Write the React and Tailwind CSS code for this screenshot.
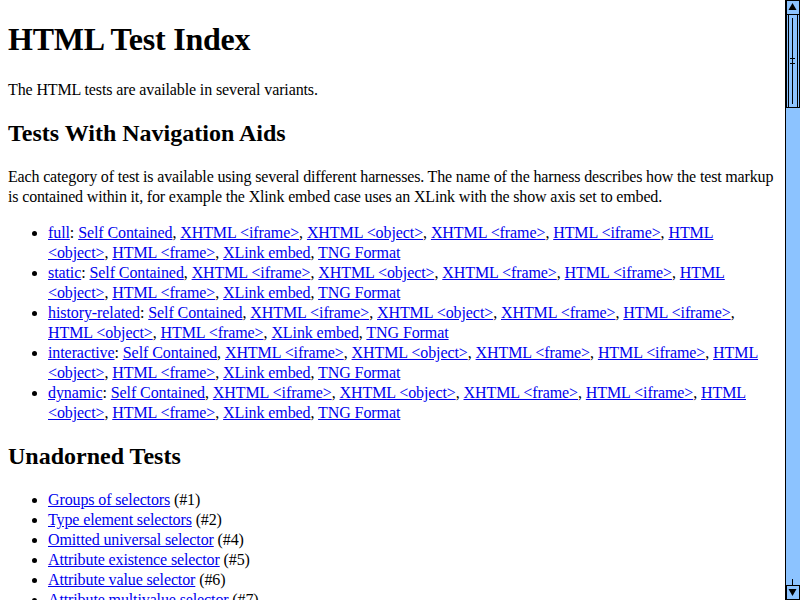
import React from "react";

const harnesses = [
  "Self Contained",
  "XHTML <iframe>",
  "XHTML <object>",
  "XHTML <frame>",
  "HTML <iframe>",
  "HTML <object>",
  "HTML <frame>",
  "XLink embed",
  "TNG Format",
];

const categories = ["full", "static", "history-related", "interactive", "dynamic"];

const unadorned = [
  ["Groups of selectors", "#1"],
  ["Type element selectors", "#2"],
  ["Omitted universal selector", "#4"],
  ["Attribute existence selector", "#5"],
  ["Attribute value selector", "#6"],
  ["Attribute multivalue selector", "#7"],
  ["Attribute value selectors (hyphen-separated attributes)", "#7b"],
];

function A({ children }) {
  return (
    <a href="#" className="text-[#0000ee] underline">
      {children}
    </a>
  );
}

function Scrollbar() {
  return (
    <svg width="15" height="600" viewBox="0 0 15 600" className="shrink-0 block">
      <rect x="0" y="0" width="15" height="600" fill="#8cc3ff" />
      <line x1="0.5" y1="0" x2="0.5" y2="600" stroke="#000" />
      {/* up button */}
      <rect x="1.5" y="0.5" width="13" height="14" fill="#8cc3ff" stroke="#000" />
      <polygon points="7.5,3 11.5,10 3.5,10" fill="#000" />
      {/* thumb */}
      <rect x="1.5" y="14.5" width="13" height="93" fill="#8cc3ff" stroke="#000" />
      <line x1="3.5" y1="15" x2="3.5" y2="107" stroke="#000" />
      <line x1="12.5" y1="15" x2="12.5" y2="107" stroke="#000" />
      <line x1="7.5" y1="18" x2="7.5" y2="104" stroke="#000" />
      <line x1="5" y1="58.5" x2="10" y2="58.5" stroke="#000" />
      <line x1="5" y1="63.5" x2="10" y2="63.5" stroke="#000" />
      {/* down button */}
      <line x1="7.5" y1="579" x2="7.5" y2="585" stroke="#000" />
      <rect x="1.5" y="585.5" width="13" height="14" fill="#8cc3ff" stroke="#000" />
      <polygon points="3.5,589 11.5,589 7.5,596" fill="#000" />
    </svg>
  );
}

export default function App() {
  return (
    <div className="flex w-[800px] h-[600px] overflow-hidden bg-white">
      <div
        className="w-[785px] h-[600px] overflow-hidden px-2 text-[16px] leading-[20px] text-black"
        style={{ fontFamily: '"Liberation Serif", "Times New Roman", serif' }}
      >
        <h1 className="text-[32px] leading-[37px] tracking-[-0.2px] font-bold mt-[21px] mb-[22px]">
          HTML Test Index
        </h1>
        <p className="mb-[19px] tracking-[-0.12px]">The HTML tests are available in several variants.</p>
        <h2 className="text-[24px] leading-[28px] font-bold mb-[20px]">Tests With Navigation Aids</h2>
        <p className="mb-4 tracking-[-0.16px]">
          Each category of test is available using several different harnesses. The name of the harness
          describes how the test markup is contained within it, for example the Xlink embed case uses an
          XLink with the show axis set to embed.
        </p>
        <ul className="list-disc pl-10 mr-[2px] tracking-[-0.09px]">
          {categories.map((c) => (
            <li key={c}>
              <A>{c}</A>:{" "}
              {harnesses.map((h, i) => (
                <React.Fragment key={h}>
                  <A>{h}</A>
                  {i < harnesses.length - 1 ? ", " : ""}
                </React.Fragment>
              ))}
            </li>
          ))}
        </ul>
        <h2 className="text-[24px] leading-[28px] font-bold mt-[19px] mb-[20px]">Unadorned Tests</h2>
        <ul className="list-disc pl-10 tracking-[-0.12px]">
          {unadorned.map(([t, n]) => (
            <li key={n}>
              <A>{t}</A> ({n})
            </li>
          ))}
        </ul>
      </div>
      <Scrollbar />
    </div>
  );
}
